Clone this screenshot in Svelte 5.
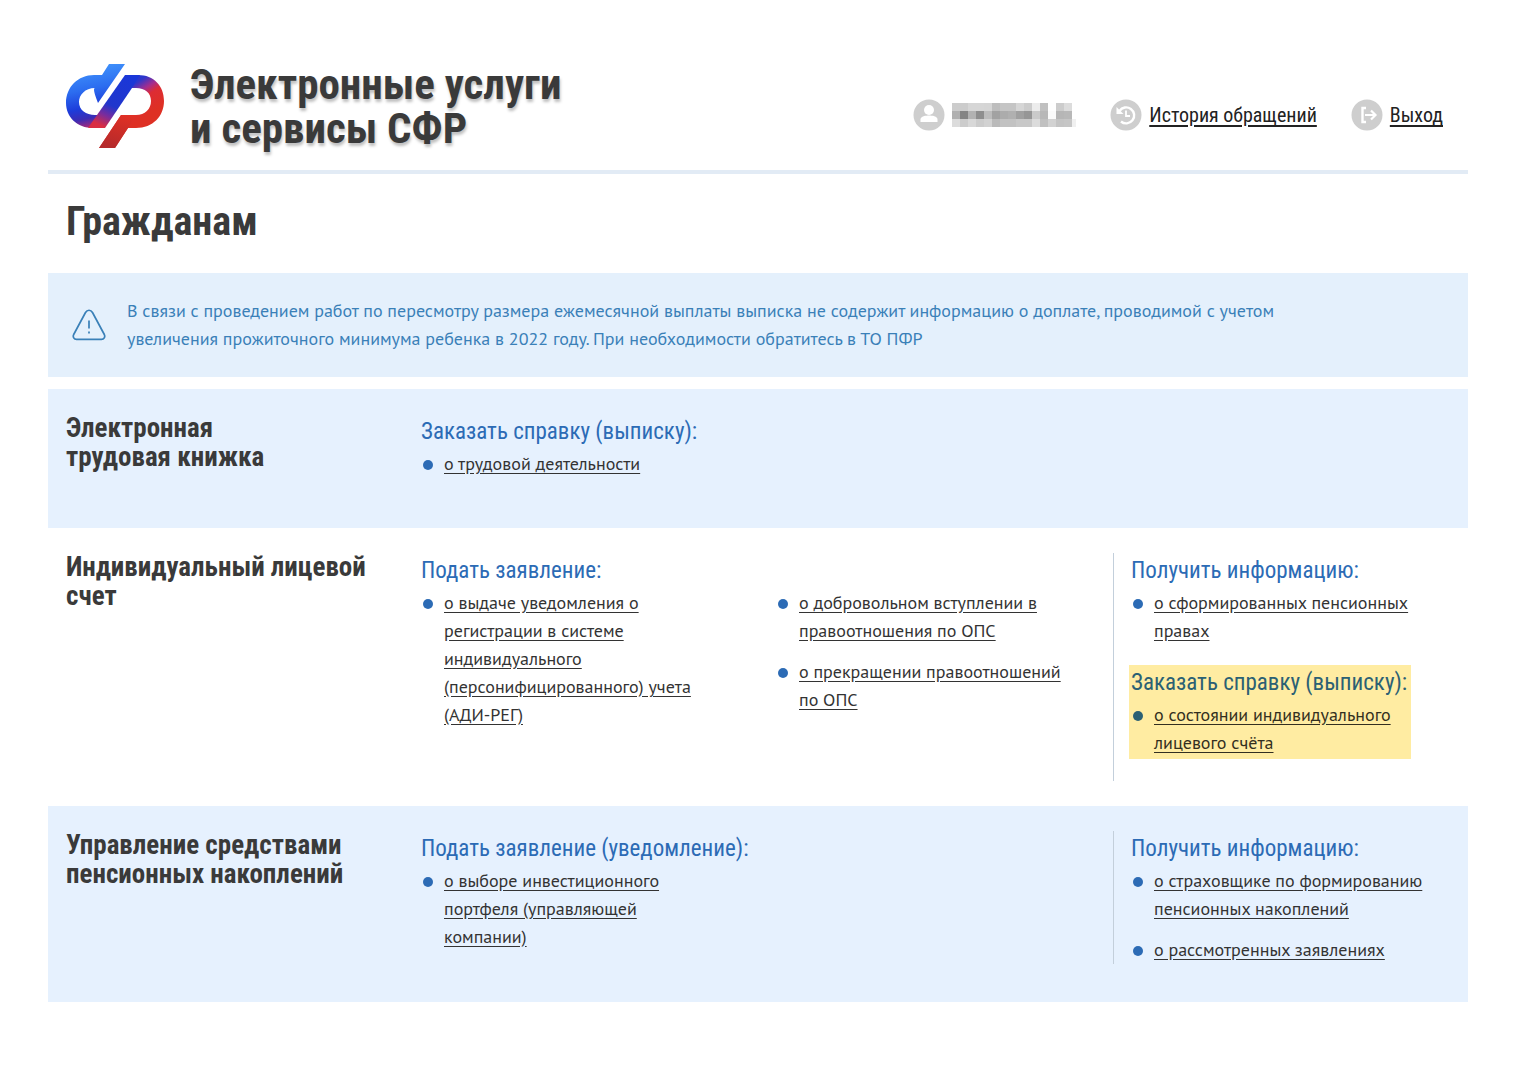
<script lang="ts">
	type Link = string[];

	interface Group {
		title: string;
		links: Link[];
		highlighted?: boolean;
	}

	interface Section {
		id: string;
		title: string[];
		main: Group;
		// continuation of the main list, shown in the third column
		more?: Link[];
		side?: Group[];
	}

	const notice = [
		'В связи с проведением работ по пересмотру размера ежемесячной выплаты выписка не содержит информацию о доплате, проводимой с учетом',
		'увеличения прожиточного минимума ребенка в 2022 году. При необходимости обратитесь в ТО ПФР'
	];

	const sections: Section[] = [
		{
			id: 'work',
			title: ['Электронная', 'трудовая книжка'],
			main: { title: 'Заказать справку (выписку):', links: [['о трудовой деятельности']] }
		},
		{
			id: 'account',
			title: ['Индивидуальный лицевой', 'счет'],
			main: {
				title: 'Подать заявление:',
				links: [
					[
						'о выдаче уведомления о',
						'регистрации в системе',
						'индивидуального',
						'(персонифицированного) учета',
						'(АДИ-РЕГ)'
					]
				]
			},
			more: [
				['о добровольном вступлении в', 'правоотношения по ОПС'],
				['о прекращении правоотношений', 'по ОПС']
			],
			side: [
				{ title: 'Получить информацию:', links: [['о сформированных пенсионных', 'правах']] },
				{
					title: 'Заказать справку (выписку):',
					links: [['о состоянии индивидуального', 'лицевого счёта']],
					highlighted: true
				}
			]
		},
		{
			id: 'savings',
			title: ['Управление средствами', 'пенсионных накоплений'],
			main: {
				title: 'Подать заявление (уведомление):',
				links: [['о выборе инвестиционного', 'портфеля (управляющей', 'компании)']]
			},
			side: [
				{
					title: 'Получить информацию:',
					links: [
						['о страховщике по формированию', 'пенсионных накоплений'],
						['о рассмотренных заявлениях']
					]
				}
			]
		}
	];

	// hidden user name, one shade per mosaic cell
	const mosaic = [
		['cc', 'cc', 'd6', 'd6', 'd5', 'bd', 'c5', 'c5', 'd6', 'cc', 'ec', 'c0', 'fe', 'cc', 'dc'],
		['b0', '84', 'b2', '8e', 'bc', 'a2', 'ac', 'b0', 'a0', '96', 'ca', 'b8', 'fb', 'b6', 'b8'],
		['dc', 'cc', 'd8', 'cc', 'd2', 'ba', 'c2', 'c2', 'c8', 'c8', 'dc', 'c0', 'd2', 'c4', 'c6']
	];
</script>

{#snippet lines(text: string[])}
	{#each text as line, i}{#if i > 0}<br />{/if}{line}{/each}
{/snippet}

{#snippet list(links: Link[])}
	<ul>
		{#each links as link}
			<li><a href="#service">{@render lines(link)}</a></li>
		{/each}
	</ul>
{/snippet}

<div class="page">
	<header>
		<a class="brand" href="#home">
			<svg class="logo" width="98" height="85" viewBox="0 0 98 85" aria-hidden="true">
				<defs>
					<linearGradient id="left" gradientUnits="userSpaceOnUse" x1="38" y1="0" x2="50" y2="60">
						<stop offset="0" stop-color="#3f91fb" />
						<stop offset="0.35" stop-color="#2c6df0" />
						<stop offset="0.65" stop-color="#1d3cda" />
						<stop offset="0.82" stop-color="#3c2cb4" />
						<stop offset="1" stop-color="#c0286c" />
					</linearGradient>
					<linearGradient id="right" gradientUnits="userSpaceOnUse" x1="54" y1="12" x2="80" y2="52">
						<stop offset="0" stop-color="#1a37d8" />
						<stop offset="0.3" stop-color="#2d37cb" />
						<stop offset="0.5" stop-color="#a52d8e" />
						<stop offset="0.65" stop-color="#dd2c34" />
						<stop offset="1" stop-color="#de3024" />
					</linearGradient>
					<linearGradient id="stem" gradientUnits="userSpaceOnUse" x1="62" y1="12" x2="38" y2="63">
						<stop offset="0" stop-color="#1a37d8" />
						<stop offset="0.6" stop-color="#2136cc" />
						<stop offset="0.8" stop-color="#7a2c9c" />
						<stop offset="1" stop-color="#d92d43" />
					</linearGradient>
					<linearGradient id="foot" x1="0.7" y1="0" x2="0.4" y2="1">
						<stop offset="0" stop-color="#e03025" />
						<stop offset="1" stop-color="#b52a2b" />
					</linearGradient>
				</defs>
				<path
					d="M43 0H59L32 39Q26 24 29 24C19 24 13 31 13 38C13 46 20 51 29 51H31L39 64H27C11 64 0 53 0 39C0 23 12 11 28 11H36Z"
					fill="url(#left)"
					clip-path="url(#none)"
				/>
				<path d="M59 0L42 24H32V42L20 30Z" fill="#fff" opacity="0" />
				<path
					d="M59 11H72C88 11 98 22 98 37C98 52 87 64 70 64H62L49 84H33L55 51H70C79 51 85 45 85 37C85 29 79 24 70 24H60Z"
					fill="url(#right)"
				/>
				<path d="M55 51H70L62 64L49 84H33Z" fill="url(#foot)" />
				<path d="M59 11H74L66 24L39 64H22L31 51Z" fill="url(#stem)" />
			</svg>
			<span class="brand-name">Электронные услуги<br />и сервисы СФР</span>
		</a>

		<nav>
			<a class="nav-item user" href="#profile" aria-label="Профиль">
				<svg width="32" height="32" viewBox="0 0 32 32" aria-hidden="true">
					<circle cx="16" cy="16" r="15.5" fill="#cecece" />
					<circle cx="16" cy="11" r="5" fill="#fff" />
					<path d="M7.500 23V20.500C7.500 17 13 16.500 16 16.500S24.500 17 24.500 20.500V23Z" fill="#fff" />
				</svg>
				<svg class="mosaic" width="124" height="24" viewBox="0 0 124 24" aria-hidden="true">
					{#each mosaic as row, y}
						{#each row as shade, x}
							<rect x={x * 8} y={y * 8} width="8" height="8" fill="#{shade}{shade}{shade}" />
						{/each}
					{/each}
					<rect x="120" y="16" width="4" height="8" fill="#f0f0f0" />
				</svg>
			</a>
			<a class="nav-item" href="#history">
				<svg width="32" height="32" viewBox="0 0 32 32" fill="none" stroke="#fff" aria-hidden="true">
					<circle cx="16" cy="16" r="15.5" fill="#cecece" stroke="none" />
					<path d="M9.500 12A8 8 0 1 1 11 22.500" stroke-width="2.400" />
					<path d="M6.500 8V15H13.500Z" fill="#fff" stroke="none" />
					<path d="M16 11.500V17H20" stroke-width="1.800" />
				</svg>
				<span>История обращений</span>
			</a>
			<a class="nav-item" href="#exit">
				<svg width="32" height="32" viewBox="0 0 32 32" fill="none" stroke="#fff" aria-hidden="true">
					<circle cx="16" cy="16" r="15.5" fill="#cecece" stroke="none" />
					<path d="M15 9H11.500V23H15" stroke-width="2.400" />
					<path d="M14 16H24M20 11.500L24.500 16L20 20.500" stroke-width="2.200" />
				</svg>
				<span>Выход</span>
			</a>
		</nav>
	</header>

	<main>
		<h1>Гражданам</h1>

		<div class="notice">
			<svg width="34" height="32" viewBox="0 0 34 32" fill="none" stroke="#3a80b8" aria-hidden="true">
				<path
					d="M13.500 3.500C15.200 0.500 18.800 0.500 20.500 3.500L32.300 25.500C33.500 28 32 30.300 29.500 30.300H4.500C2 30.300 0.500 28 1.700 25.500Z"
					stroke-width="1.700"
				/>
				<path d="M17 11.500V19.500M17 22.500V24.500" stroke-width="1.700" />
			</svg>
			<p>{@render lines(notice)}</p>
		</div>

		{#each sections as section (section.id)}
			<section class={section.id}>
				<h2>{@render lines(section.title)}</h2>
				<div class="col">
					<h3>{section.main.title}</h3>
					{@render list(section.main.links)}
				</div>
				<div class="col more">
					{#if section.more}
						{@render list(section.more)}
					{/if}
				</div>
				{#if section.side}
					<div class="col side">
						{#each section.side as group}
							<div class="group" class:highlighted={group.highlighted}>
								<h3>{group.title}</h3>
								{@render list(group.links)}
							</div>
						{/each}
					</div>
				{/if}
			</section>
		{/each}
	</main>
</div>

<style>
	:global(body) {
		margin: 0;
		background: #fff;
	}

	.page {
		padding: 48px 52px 64px 48px;
		color: #333;
		font-family: 'PT Sans', 'Noto Sans', sans-serif;
		font-size: 18px;
		line-height: 28px;
	}

	header {
		display: flex;
		align-items: flex-start;
		justify-content: space-between;
		padding: 14px 25px 20px 18px;
		border-bottom: 4px solid #e2ebf5;
	}

	.brand {
		display: flex;
		align-items: center;
		gap: 26px;
		color: #3a3a3a;
		text-decoration: none;
	}

	.brand-name,
	nav,
	h1,
	h2,
	h3 {
		font-family: 'Roboto Condensed', 'Liberation Sans Narrow', Roboto, sans-serif;
	}

	.brand-name {
		font-size: 43px;
		font-weight: 700;
		line-height: 44px;
		text-shadow: 1px 3px 3px rgba(0, 0, 0, 0.25);
	}

	nav {
		display: flex;
		gap: 34px;
		padding-top: 37px;
	}

	.nav-item {
		display: flex;
		align-items: center;
		gap: 7px;
		color: #222;
		font-size: 20px;
		text-underline-offset: 3px;
	}

	.mosaic {
		flex-shrink: 0;
	}

	h1 {
		margin: 0;
		padding: 24px 18px 27px;
		color: #3a3a3a;
		font-size: 40px;
		line-height: 48px;
	}

	.notice {
		display: flex;
		align-items: center;
		gap: 21px;
		margin-bottom: 12px;
		padding: 24px;
		background: #e4f0fc;
		color: #3a80b8;
	}

	.notice svg {
		flex-shrink: 0;
	}

	.notice p {
		margin: 0;
	}

	section {
		display: grid;
		grid-template-columns: repeat(4, 1fr);
		padding: 25px 0;
	}

	section:nth-of-type(odd) {
		background: #e6f1fe;
	}

	h2 {
		margin: 0;
		padding-left: 18px;
		color: #3a3a3a;
		font-size: 27px;
		line-height: 29px;
		white-space: nowrap;
	}

	.col {
		padding: 0 0 0 18px;
	}

	.work .col {
		padding-bottom: 25px;
	}

	.more {
		padding-top: 36px;
	}

	.side {
		border-left: 1px solid #c3cfdb;
		padding-left: 17px;
	}

	.account .side {
		padding-bottom: 22px;
	}

	.savings {
		padding-bottom: 38px;
	}

	h3 {
		margin: 0;
		padding: 2px 0;
		color: #2c6bb5;
		font-size: 23px;
		font-weight: 400;
		line-height: 32px;
		white-space: nowrap;
	}

	ul {
		display: flex;
		flex-direction: column;
		gap: 13px;
		margin: 0;
		padding: 0;
		list-style: none;
	}

	li {
		display: flex;
		gap: 11px;
		padding-left: 2px;
		white-space: nowrap;
	}

	li::before {
		content: '';
		flex-shrink: 0;
		width: 10px;
		height: 10px;
		margin-top: 10px;
		border-radius: 50%;
		background: #2c6bb5;
	}

	li a {
		color: #333;
		text-underline-offset: 3px;
	}

	.group + .group {
		margin-top: 20px;
	}

	.highlighted {
		width: fit-content;
		margin-left: -2px;
		padding: 0 4px 2px 2px;
		background: #ffeca2;
	}

	.highlighted h3 {
		color: #2b6074;
	}

	.highlighted li::before {
		background: #2b6074;
	}

	.highlighted a {
		color: #332f20;
	}
</style>
